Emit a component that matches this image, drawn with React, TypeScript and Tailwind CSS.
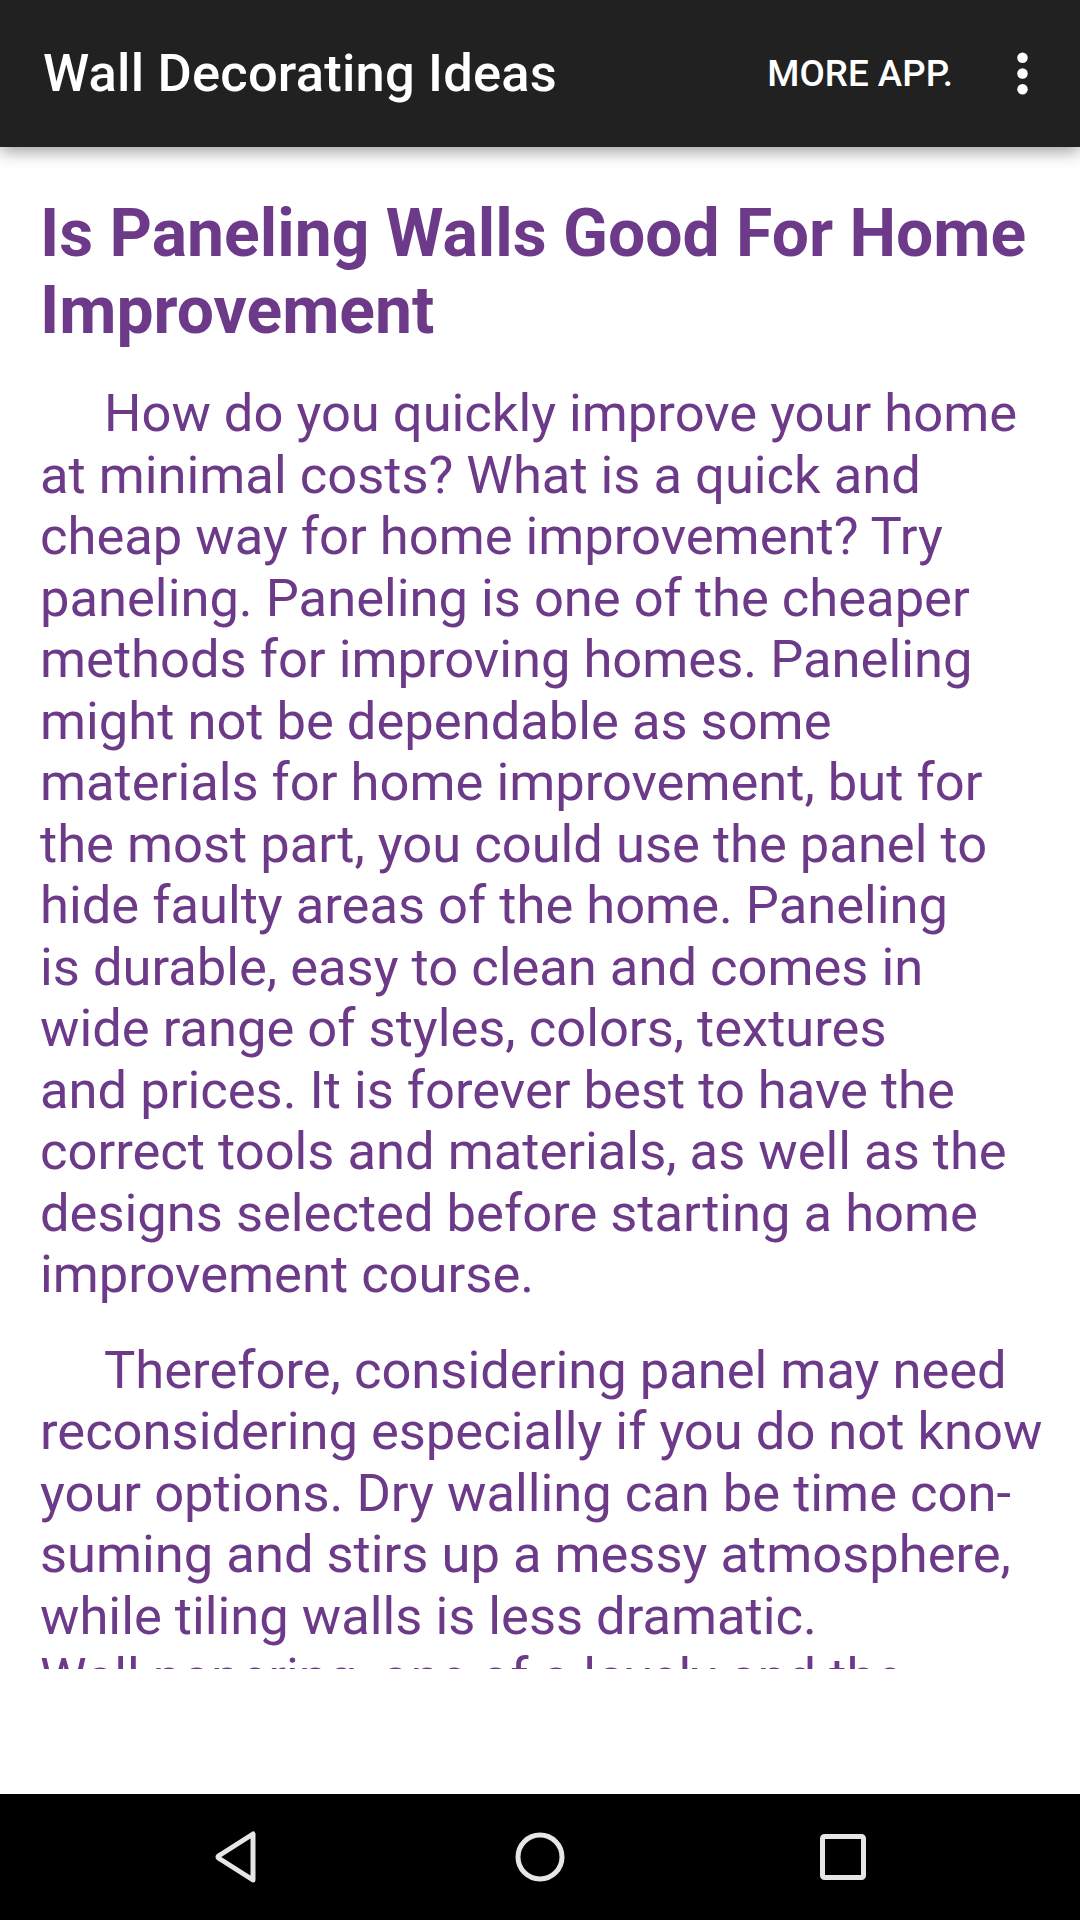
export default function App() {
  const purple = "text-[#6c3a88]";

  return (
    <div className="w-[1080px] h-[1920px] flex flex-col bg-white overflow-hidden font-['Roboto',sans-serif]">
      {/* app bar */}
      <header className="relative z-10 h-[147px] shrink-0 flex items-center bg-[#212121] shadow-[0_4px_16px_rgba(0,0,0,0.4)]">
        <h1 className="ml-[43px] text-[52.5px] font-medium text-white tracking-[0.2px]">Wall Decorating Ideas</h1>
        <div className="flex-1" />
        <span className="text-[36.75px] font-medium text-white">MORE APP.</span>
        <svg className="ml-[38px] mr-[26px]" width="63" height="63" viewBox="0 0 24 24" fill="#fff">
          <circle cx="12" cy="6" r="2" />
          <circle cx="12" cy="12" r="2" />
          <circle cx="12" cy="18" r="2" />
        </svg>
      </header>

      {/* article */}
      <main className={`h-[1522px] shrink-0 overflow-hidden px-[40px] pt-[48px] ${purple}`}>
        <h2 className="text-[66px] leading-[77px] font-bold whitespace-nowrap">
          Is Paneling Walls Good For Home<br />Improvement
        </h2>

        <p className="mt-[34px] text-[52.5px] leading-[61.5px] whitespace-nowrap">
          <span className="pl-[64px]">How do you quickly improve your home</span><br />
          at minimal costs? What is a quick and<br />
          cheap way for home improvement? Try<br />
          paneling. Paneling is one of the cheaper<br />
          methods for improving homes. Paneling<br />
          might not be dependable as some<br />
          materials for home improvement, but for<br />
          the most part, you could use the panel to<br />
          hide faulty areas of the home. Paneling<br />
          is durable, easy to clean and comes in<br />
          wide range of styles, colors, textures<br />
          and prices. It is forever best to have the<br />
          correct tools and materials, as well as the<br />
          designs selected before starting a home<br />
          improvement course.
        </p>

        <p className="mt-[34px] text-[52.5px] leading-[61.5px] whitespace-nowrap">
          <span className="pl-[64px]">Therefore, considering panel may need</span><br />
          reconsidering especially if you do not know<br />
          your options. Dry walling can be time con-<br />
          suming and stirs up a messy atmosphere,<br />
          while tiling walls is less dramatic.<br />
          Wall papering, one of a lovely and the
        </p>
      </main>

      {/* empty strip */}
      <div className="flex-1 bg-white" />

      {/* system nav */}
      <nav className="h-[126px] shrink-0 bg-black flex items-center">
        <div className="w-[136px]" />
        <div className="w-[200px] flex justify-center">
          <svg width="48" height="54" viewBox="0 0 48 54">
            <path d="M41 4 L41 50 L8 29 Q4 27 8 25 Z" fill="none" stroke="#e6e6e6" strokeWidth="5" strokeLinejoin="round" />
          </svg>
        </div>
        <div className="w-[104px]" />
        <div className="w-[200px] flex justify-center">
          <svg width="52" height="52" viewBox="0 0 52 52">
            <circle cx="26" cy="26" r="22" fill="none" stroke="#e6e6e6" strokeWidth="5" />
          </svg>
        </div>
        <div className="w-[103px]" />
        <div className="w-[200px] flex justify-center">
          <svg width="46" height="46" viewBox="0 0 46 46">
            <rect x="2.5" y="2.5" width="41" height="41" rx="2" fill="none" stroke="#e6e6e6" strokeWidth="5" />
          </svg>
        </div>
      </nav>
    </div>
  );
}
